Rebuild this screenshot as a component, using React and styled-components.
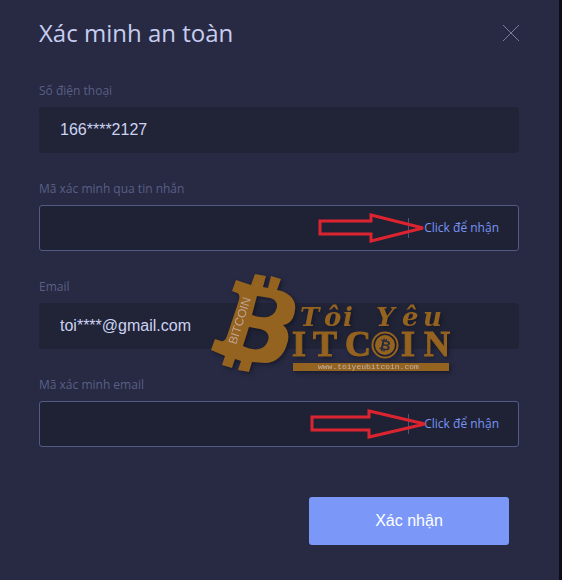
import React, { useState } from "react";
import styled, { createGlobalStyle } from "styled-components";

const GlobalStyle = createGlobalStyle`
  *, *::before, *::after { box-sizing: border-box; }
  body {
    margin: 0;
    background: #0b0d18;
    color: #ccd2f0;
    font-family: "Open Sans", "Noto Sans", sans-serif;
  }
  button, input { font: inherit; }
`;

const Page = styled.div`
  display: flex;
  align-items: flex-start;
  min-height: 100vh;
  overflow: hidden;
`;

const Dialog = styled.form`
  position: relative;
  flex: 1;
  min-width: 0;
  min-height: 100vh;
  padding: 0 40px 32px 39px;
  background: #272a42;
`;

const Backdrop = styled.div`
  flex: 0 0 3px;
  align-self: stretch;
  background: #0b0d18;
`;

const Header = styled.header`
  display: flex;
  align-items: center;
  justify-content: space-between;
  height: 66px;
  margin-bottom: 15px;
`;

const Title = styled.h1`
  margin: 0;
  color: #c7cdf0;
  font-size: 24px;
  font-weight: 400;
  line-height: 32px;
`;

const CloseButton = styled.button`
  display: flex;
  padding: 0;
  border: 0;
  background: none;
  color: #777d9f;
  cursor: pointer;
`;

const Fields = styled.div`
  display: grid;
  gap: 26px;
`;

const Field = styled.div`
  display: grid;
  gap: 6px;
`;

const Label = styled.label`
  color: #5a5f86;
  font-size: 12px;
  line-height: 20px;
`;

const Control = styled.div`
  position: relative;
  display: flex;
  align-items: center;
  height: 46px;
  border: 1px solid ${(p) => (p.$editable ? "#525b87" : "#212437")};
  border-radius: 3px;
  background: ${(p) => (p.$editable ? "#1f2234" : "#212437")};
`;

const Input = styled.input`
  flex: 1;
  min-width: 0;
  height: 100%;
  padding: 0 20px;
  border: 0;
  outline: 0;
  background: transparent;
  color: #ccd3f2;
  font-family: "Liberation Sans", Arial, sans-serif;
  font-size: 16px;
`;

const CodeButton = styled.button`
  height: 20px;
  margin-right: 19px;
  padding: 0 0 0 15px;
  border: 0;
  border-left: 1px solid #4d5478;
  background: none;
  color: #7894f5;
  font-size: 12px;
  line-height: 20px;
  white-space: nowrap;
  cursor: pointer;
`;

const Pointer = styled.svg`
  position: absolute;
  top: 5px;
  right: ${(p) => p.$right}px;
  pointer-events: none;
`;

const Actions = styled.div`
  display: flex;
  justify-content: flex-end;
  padding: 50px 10px 0 0;
`;

const Submit = styled.button`
  width: 200px;
  height: 48px;
  border: 0;
  border-radius: 3px;
  background: #7b98f8;
  color: #fff;
  font-family: "Liberation Sans", Arial, sans-serif;
  font-size: 16px;
  cursor: pointer;
`;

const Watermark = styled.svg`
  position: absolute;
  top: 270px;
  left: 208px;
  pointer-events: none;
  filter: drop-shadow(2px 2px 2px rgba(10, 12, 25, 0.5));
`;

function Arrow({ shaft, head, right }) {
  const neck = shaft + 2;
  const width = neck + head + 4;
  return (
    <Pointer $right={right} width={width} height="32" viewBox={`0 0 ${width} 32`} aria-hidden="true">
      <path
        d={`M2 10H${neck}V4L${neck + head} 17L${neck} 30V23H2Z`}
        fill="none" stroke="#dc2430" strokeWidth="3"
      />
    </Pointer>
  );
}

function BrandMark() {
  return (
    <Watermark width="246" height="108" viewBox="0 0 246 108" role="img" aria-label="Tôi Yêu Bitcoin">
      <g fill="#94631f">
        <path
          fillRule="evenodd"
          d="M28 10L43 15L47 4L58 6L55 17L60 18L63 6L73 9L69 20C80 22 89 29 87 40C86 49 82 54 75 55C80 59 82 66 79 74C76 86 67 93 57 93L44 92L41 102L30 100L33 91L27 89L24 98L14 95L17 86L3 80L7 69L13 71C16 72 18 69 19 66L30 33C32 28 32 24 29 23L24 21ZM49 26L44 45C53 48 62 49 67 42C71 35 69 30 62 28C58 27 54 27 49 26ZM41 57L35 76C43 80 54 82 59 73C63 65 59 61 52 59C48 58 45 58 41 57Z"
        />
        <g fontFamily='"DejaVu Serif", serif' fontStyle="italic" fontWeight="700" fontSize="26">
          <text x="92" y="56">T</text>
          <text x="116" y="56">ô</text>
          <text x="135" y="56">i</text>
          <text x="168" y="56">Y</text>
          <text x="194" y="56">ê</text>
          <text x="215" y="56">u</text>
        </g>
        <g fontFamily='"Liberation Serif", serif' fontWeight="700" fontSize="36" stroke="#94631f">
          <text x="84" y="86">I</text>
          <text x="105" y="86">T</text>
          <text x="137" y="86">C</text>
          <text x="193" y="86">I</text>
          <text x="216" y="86">N</text>
        </g>
        <rect x="85" y="93" width="156" height="8" />
        <circle cx="177" cy="75" r="10" />
      </g>
      <circle cx="177" cy="75" r="12.5" fill="none" stroke="#94631f" strokeWidth="2" />
      <text transform="translate(176 80) rotate(12)" textAnchor="middle" fill="#272a42" fontFamily='"DejaVu Sans", sans-serif' fontWeight="700" fontSize="14">₿</text>
      <text x="110" y="99" fill="#c0b5ad" fontFamily='"Liberation Mono", monospace' fontSize="8">www.toiyeubitcoin.com</text>
      <text transform="translate(28 75) rotate(-72)" fill="#c0a294" fontFamily='"Liberation Sans", sans-serif' fontSize="12">BITCOIN</text>
    </Watermark>
  );
}

function FormField({ id, label, value, arrow }) {
  const [text, setText] = useState(value || "");
  return (
    <Field>
      <Label htmlFor={id}>{label}</Label>
      <Control $editable={Boolean(arrow)}>
        <Input id={id} value={text} readOnly={!arrow} onChange={(e) => setText(e.target.value)} />
        {arrow && <CodeButton type="button">Click để nhận</CodeButton>}
        {arrow && <Arrow {...arrow} />}
      </Control>
    </Field>
  );
}

export default function App() {
  return (
    <Page>
      <GlobalStyle />
      <Dialog onSubmit={(e) => e.preventDefault()}>
        <Header>
          <Title>Xác minh an toàn</Title>
          <CloseButton type="button" aria-label="Đóng">
            <svg width="16" height="16" viewBox="0 0 16 16" stroke="currentColor" fill="none">
              <path d="M0 0L16 16M16 0L0 16" />
            </svg>
          </CloseButton>
        </Header>
        <Fields>
          <FormField id="phone" label="Số điện thoại" value="166****2127" />
          <FormField id="sms-code" label="Mã xác minh qua tin nhắn" arrow={{ shaft: 51, head: 52, right: 91 }} />
          <FormField id="email" label="Email" value="toi****@gmail.com" />
          <FormField id="email-code" label="Mã xác minh email" arrow={{ shaft: 57, head: 56, right: 89 }} />
        </Fields>
        <Actions>
          <Submit type="submit">Xác nhận</Submit>
        </Actions>
        <BrandMark />
      </Dialog>
      <Backdrop />
    </Page>
  );
}
